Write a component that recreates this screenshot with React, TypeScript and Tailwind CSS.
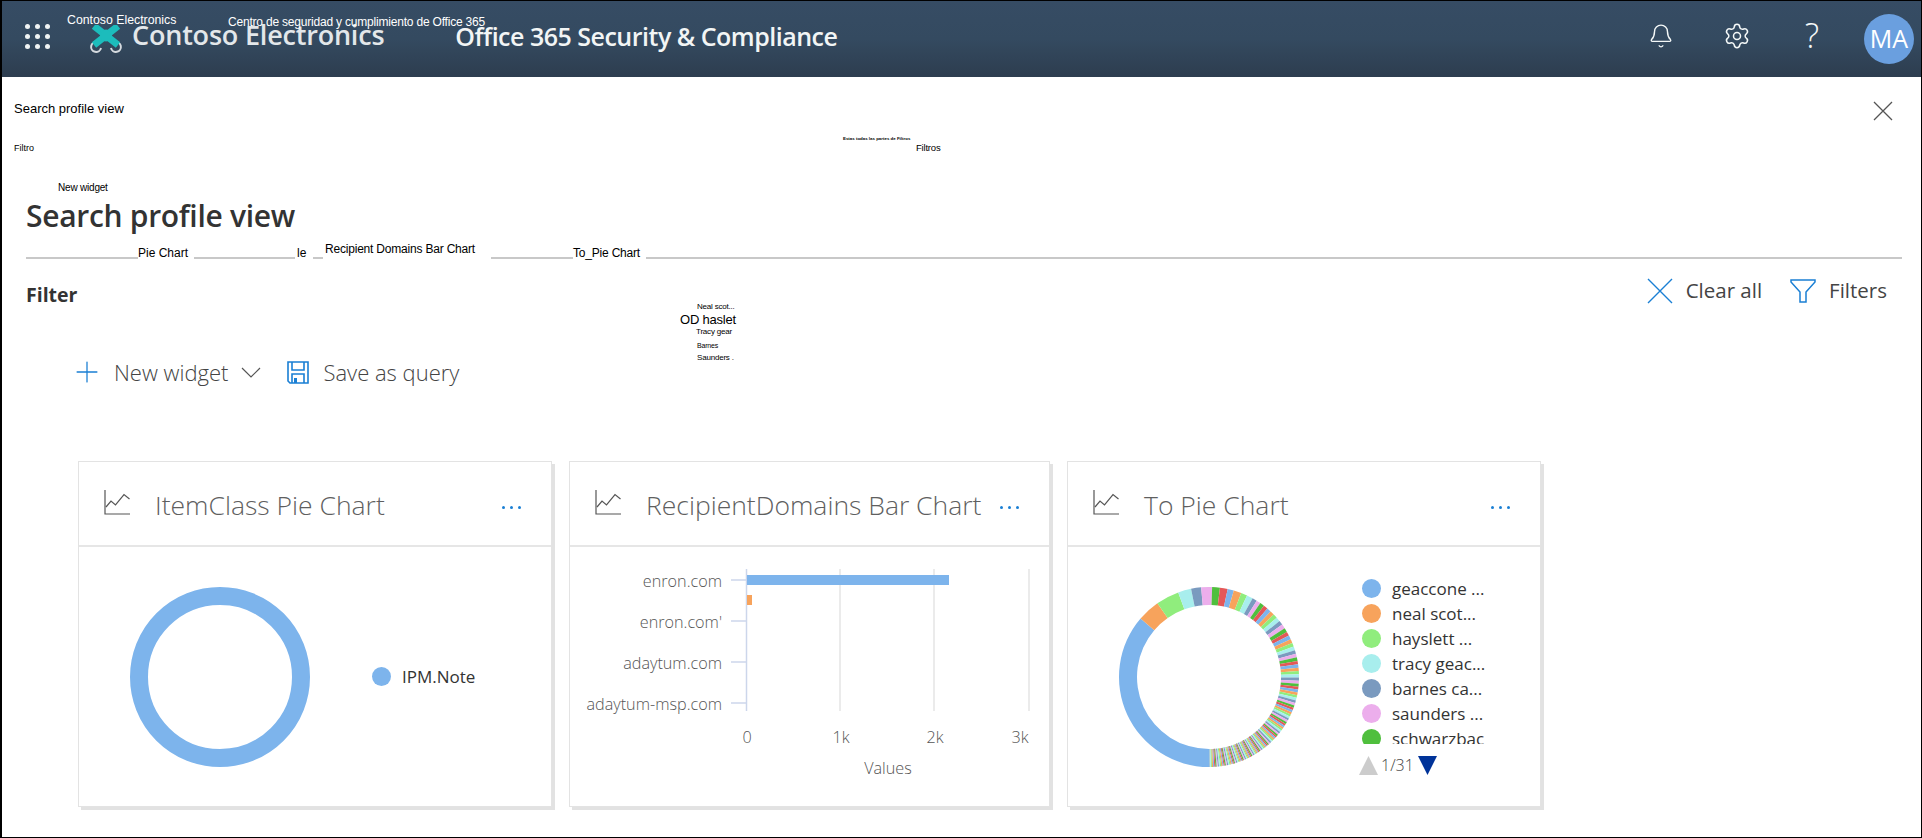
import React from "react";
import { Bell, Settings, Plus } from "lucide-react";

const font = "font-['Open_Sans',sans-serif]";
const arial = "font-['Liberation_Sans',sans-serif]";

const PIE_COLORS = ["#7db4ec", "#f7a35c", "#90ed7d", "#a8eeed", "#7a9abf", "#ecaeec", "#4fbf3d", "#e45858"];

const legendItems = [
  { name: "geaccone ...", color: PIE_COLORS[0] },
  { name: "neal scot...", color: PIE_COLORS[1] },
  { name: "hayslett ...", color: PIE_COLORS[2] },
  { name: "tracy geac...", color: PIE_COLORS[3] },
  { name: "barnes ca...", color: PIE_COLORS[4] },
  { name: "saunders ...", color: PIE_COLORS[5] },
  { name: "schwarzbac", color: PIE_COLORS[6] },
];

function polar(r: number, deg: number) {
  const a = ((deg - 90) * Math.PI) / 180;
  return [100 + r * Math.cos(a), 100 + r * Math.sin(a)];
}

function slicePath(from: number, to: number) {
  const [x1, y1] = polar(90, from);
  const [x2, y2] = polar(90, to);
  const [x3, y3] = polar(72, to);
  const [x4, y4] = polar(72, from);
  const large = to - from > 180 ? 1 : 0;
  return `M${x1} ${y1}A90 90 0 ${large} 1 ${x2} ${y2}L${x3} ${y3}A72 72 0 ${large} 0 ${x4} ${y4}Z`;
}

// big slices first, then the long tail of thin ones running round to the bottom
function buildSlices() {
  const big = [130.5, 14.5, 15, 8.5, 6.5, 7, 5, 5, 4, 5, 4, 4, 3];
  const slices: { from: number; to: number; color: string }[] = [];
  let angle = 180;
  big.forEach((w, i) => {
    slices.push({ from: angle, to: angle + w, color: PIE_COLORS[i % 8] });
    angle += w;
  });
  let i = big.length;
  const end = 540;
  while (angle < end) {
    const left = end - angle;
    const w = Math.max(0.75, Math.min(2.8, left / 45));
    slices.push({ from: angle, to: Math.min(end, angle + w), color: PIE_COLORS[i % 8] });
    angle += w;
    i++;
  }
  return slices;
}

const ChartIcon = () => (
  <svg width="26" height="26" viewBox="0 0 26 26" fill="none" stroke="#555" strokeWidth="1.2" className="mt-[-3px] shrink-0">
    <path d="M1 1V25H26" />
    <path d="M2 18L7 12L11.5 16L20 5.5L25.5 10" />
  </svg>
);

const Card = ({ title, width, children }: { title: string; width: string; children: React.ReactNode }) => (
  <div className={`flex h-[346px] shrink-0 flex-col border border-[#e3e3e3] bg-white shadow-[3px_3px_0_#e2e2e2] ${width}`}>
    <div className="flex h-[85px] items-center border-b-2 border-[#e6e6e6] pl-[25px] pr-[30px]">
      <ChartIcon />
      <span className={`ml-[25px] mt-[4px] text-[26.5px] leading-none font-light text-[#5f5f5f] ${font}`}>{title}</span>
      <span className="ml-auto mt-[8px] flex gap-[5px]">
        <i className="h-[3px] w-[3px] rounded-full bg-[#1a7fd4]" />
        <i className="h-[3px] w-[3px] rounded-full bg-[#1a7fd4]" />
        <i className="h-[3px] w-[3px] rounded-full bg-[#1a7fd4]" />
      </span>
    </div>
    {children}
  </div>
);

const BarChart = () => (
  <svg width="479" height="258" viewBox="0 0 479 258" className={font}>
    {[270, 364, 459].map((x) => (
      <line key={x} x1={x} y1="22" x2={x} y2="164" stroke="#e4e4e4" strokeWidth="1.5" />
    ))}
    <line x1="176.5" y1="22" x2="176.5" y2="164" stroke="#ccd6eb" strokeWidth="1.5" />
    {[33, 74, 115, 156].map((y) => (
      <line key={y} x1="161" y1={y} x2="176" y2={y} stroke="#ccd6eb" strokeWidth="1.5" />
    ))}
    <rect x="177" y="28" width="202" height="10" fill="#7db4ec" />
    <rect x="177" y="48" width="5" height="10" fill="#f7a35c" />
    <g fontSize="16.2" fontWeight="300" fill="#555" textAnchor="end">
      <text x="152" y="40">enron.com</text>
      <text x="152" y="81">enron.com'</text>
      <text x="152" y="122">adaytum.com</text>
      <text x="152" y="163">adaytum-msp.com</text>
    </g>
    <g fontSize="16.2" fontWeight="300" fill="#555" textAnchor="middle">
      <text x="177" y="196">0</text>
      <text x="271" y="196">1k</text>
      <text x="365" y="196">2k</text>
      <text x="450" y="196">3k</text>
      <text x="318" y="227">Values</text>
    </g>
  </svg>
);

export default function App() {
  const slices = buildSlices();
  return (
    <div className={`h-[838px] w-[1922px] overflow-hidden border-y border-l-2 border-r border-black bg-white ${font}`}>
      <header className="relative flex h-[76px] items-center bg-gradient-to-b from-[#364c64] via-[#344a60] to-[#2d3d4f] text-white">
        <div className="ml-[23px] mt-[-5px] grid w-[24px] grid-cols-3 gap-x-[6px] gap-y-[5px]">
          {Array.from({ length: 9 }).map((_, i) => (
            <i key={i} className="h-[5px] w-[5px] rounded-full bg-[#f0f4f4]" />
          ))}
        </div>
        <svg width="36" height="30" viewBox="0 0 36 30" className="ml-[39px] mt-[1px]" fill="none">
          <path d="M9 17A5 5 0 1 0 13 23M27 17A5 5 0 1 1 23 23" stroke="#d5dadf" strokeWidth="2" />
          <path d="M6 1L30 20M30 1L6 20" stroke="#1cbcbc" strokeWidth="7" />
          <circle cx="18" cy="10.5" r="6" fill="#1cbcbc" />
        </svg>
        <span className="ml-[8px] mt-[-9px] text-[27px] font-semibold leading-none tracking-[-0.2px] text-[#e3e7ea]">Contoso Electronics</span>
        <span className="ml-[71px] mt-[-5px] text-[25px] font-semibold leading-none tracking-[-0.5px] text-[#f2f5f5]">Office 365 Security &amp; Compliance</span>
        <Bell size={26} strokeWidth={1.3} className="ml-auto mt-[-7px] text-[#f4f8f8]" />
        <Settings size={28} strokeWidth={1.3} className="ml-[49px] mt-[-7px] text-[#f4f8f8]" />
        <span className="ml-[54px] mt-[-9px] text-[34px] font-light leading-none text-[#f4f8f8]">?</span>
        <div className="ml-[45px] mr-[7px] flex h-[50px] w-[50px] items-center justify-center rounded-full bg-[#6a9fdf] text-[25px] text-white">
          MA
        </div>
        <span className={`absolute left-[65px] top-[13px] text-[12.3px] leading-none ${arial}`}>Contoso Electronics</span>
        <span className={`absolute left-[226px] top-[15px] text-[12px] leading-none tracking-[-0.2px] ${arial}`}>
          Centro de seguridad y cumplimiento de Office 365
        </span>
      </header>

      <section className={`flex h-[57px] items-center justify-between pl-[12px] pr-[28px] text-black ${arial}`}>
        <span className="mt-[5px] text-[13px] leading-none">Search profile view</span>
        <svg width="20" height="20" viewBox="0 0 20 20" stroke="#555" strokeWidth="1.3" className="mt-[11px]">
          <path d="M1 1L19 19M19 1L1 19" />
        </svg>
      </section>

      <div className={`flex h-[24px] items-start pl-[12px] text-[9px] leading-none text-black ${arial}`}>
        <span className="mt-[10px]">Filtro</span>
        <span className="ml-[809px] mt-[3px] w-[73px] whitespace-nowrap text-[4.4px] font-bold leading-none">Estas todas las partes de Filtros</span>
        <span className="mt-[9px] text-[9.5px] tracking-[-0.2px]">Filtros</span>
      </div>

      <div className={`ml-[56px] mt-[25px] h-[13px] text-[10px] leading-none tracking-[-0.2px] text-black ${arial}`}>New widget</div>

      <h1 className="ml-[24px] text-[30px] font-semibold leading-[40px] tracking-[-0.3px] text-[#333]">Search profile view</h1>

      <div className={`ml-[24px] mt-[1px] flex h-[22px] w-[1876px] items-end text-[12px] leading-none text-black ${arial}`}>
        <i className="h-[2px] w-[112px] bg-[#c8c8c8]" />
        <span className="mb-[-1px] w-[56px] pb-[1px]">Pie Chart</span>
        <i className="h-[2px] w-[101px] bg-[#c8c8c8]" />
        <span className="mb-[-1px] ml-[2px] w-[16px] pb-[1px]">le</span>
        <i className="h-[2px] w-[10px] bg-[#c8c8c8]" />
        <span className="ml-[2px] mb-[4px] w-[166px] tracking-[-0.2px]">Recipient Domains Bar Chart</span>
        <i className="h-[2px] w-[82px] bg-[#c8c8c8]" />
        <span className="mb-[-1px] w-[73px] pb-[1px] tracking-[-0.2px]">To_Pie Chart</span>
        <i className="h-[2px] flex-1 bg-[#c8c8c8]" />
      </div>

      <div className="relative">
        <div className="flex h-[63px] items-center justify-between pl-[24px] pr-[34px]">
          <span className="mt-[8px] text-[19.5px] font-bold text-[#333]">Filter</span>
          <div className="flex items-center text-[20.5px] text-[#444]">
            <svg width="26" height="26" viewBox="0 0 26 26" stroke="#1a7fd4" strokeWidth="1.4">
              <path d="M1 1L25 25M25 1L1 25" />
            </svg>
            <span className="ml-[13px]">Clear all</span>
            <svg width="26" height="24" viewBox="0 0 26 24" fill="none" stroke="#1a7fd4" strokeWidth="1.5" className="ml-[28px]">
              <path d="M1 1H25V3L16 13V23H10V13L1 3Z" />
            </svg>
            <span className="ml-[13px]">Filters</span>
          </div>
        </div>
        <div className={`absolute left-[678px] top-[44px] flex flex-col leading-none text-black ${arial}`}>
          <span className="ml-[17px] text-[8px] tracking-[-0.2px]">Neal scot...</span>
          <span className="mt-[2px] text-[13px] tracking-[-0.2px]">OD haslet</span>
          <span className="ml-[16px] mt-[2px] text-[8px] tracking-[-0.2px]">Tracy gear</span>
          <span className="ml-[17px] mt-[6px] text-[7px] tracking-[-0.2px]">Barnes</span>
          <span className="ml-[17px] mt-[5px] text-[8px] tracking-[-0.2px]">Saunders .</span>
        </div>
        <div className="flex items-center pl-[68px] pt-[33px] text-[22px] font-light text-[#444]">
          <Plus size={34} strokeWidth={0.9} className="text-[#1a7fd4]" />
          <span className="ml-[10px]">New widget</span>
          <svg width="20" height="11" viewBox="0 0 20 11" fill="none" stroke="#555" strokeWidth="1.2" className="ml-[13px]">
            <path d="M1 1L10 10L19 1" />
          </svg>
          <svg width="22" height="23" viewBox="0 0 22 23" fill="none" stroke="#1a7fd4" strokeWidth="1.6" className="ml-[26px]">
            <path d="M1 1H21V22H3L1 20Z" />
            <path d="M5 1V9H17V1M5 22V13H17V22" />
            <rect x="7" y="17" width="3" height="5" fill="#1a7fd4" stroke="none" />
          </svg>
          <span className="ml-[14px]">Save as query</span>
        </div>
      </div>

      <div className="ml-[76px] mt-[72px] flex gap-[17px]">
        <Card title="ItemClass Pie Chart" width="w-[474px]">
          <div className="flex flex-1 items-center">
            <svg width="200" height="200" viewBox="0 0 200 200" className="ml-[41px] shrink-0">
              <circle cx="100" cy="100" r="81" fill="none" stroke="#7db4ec" strokeWidth="18" />
            </svg>
            <span className="ml-[52px] h-[19px] w-[19px] rounded-full bg-[#7db4ec]" />
            <span className="ml-[11px] text-[17px] text-[#333]">IPM.Note</span>
          </div>
        </Card>
        <Card title="RecipientDomains Bar Chart" width="w-[481px]">
          <BarChart />
        </Card>
        <Card title="To Pie Chart" width="w-[474px]">
          <div className="flex flex-1 items-center">
            <svg width="200" height="200" viewBox="0 0 200 200" className="ml-[41px] shrink-0">
              {slices.map((s, i) => (
                <path key={i} d={slicePath(s.from, s.to)} fill={s.color} />
              ))}
            </svg>
            <div className="ml-[53px] flex flex-col">
              <div className="flex h-[168px] flex-col overflow-hidden">
                {legendItems.map((it) => (
                  <div key={it.name} className="flex h-[25px] shrink-0 items-center">
                    <span className="h-[19px] w-[19px] shrink-0 rounded-full" style={{ background: it.color }} />
                    <span className="ml-[11px] text-[17px] leading-none text-[#333]">{it.name}</span>
                  </div>
                ))}
              </div>
              <div className="ml-[-3px] mt-[9px] flex items-center text-[16px] font-light text-[#444]">
                <svg width="19" height="19" viewBox="0 0 19 19"><path d="M9.5 0L19 19H0Z" fill="#cccccc" /></svg>
                <span className="ml-[3px]">1/31</span>
                <svg width="19" height="19" viewBox="0 0 19 19" className="ml-[4px]"><path d="M0 0H19L9.5 19Z" fill="#003399" /></svg>
              </div>
            </div>
          </div>
        </Card>
      </div>
    </div>
  );
}
